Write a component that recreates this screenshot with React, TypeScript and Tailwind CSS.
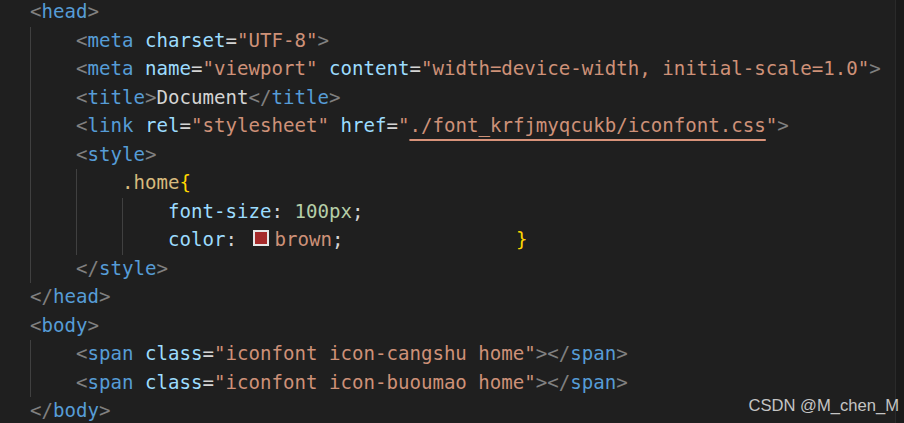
import React from "react";

const br = "text-[#808080]";
const tg = "text-[#569cd6]";
const at = "text-[#9cdcfe]";
const st = "text-[#ce9178]";
const tx = "text-[#d4d4d4]";

const B = ({ children }: { children: React.ReactNode }) => <span className={br}>{children}</span>;
const T = ({ children }: { children: React.ReactNode }) => <span className={tg}>{children}</span>;
const A = ({ children }: { children: React.ReactNode }) => <span className={at}>{children}</span>;
const S = ({ children }: { children: React.ReactNode }) => <span className={st}>{children}</span>;
const X = ({ children }: { children: React.ReactNode }) => <span className={tx}>{children}</span>;

type Line = { indent: number; guides: number[]; content: React.ReactNode };

const lines: Line[] = [
  { indent: 0, guides: [], content: (<><B>&lt;</B><T>head</T><B>&gt;</B></>) },
  { indent: 1, guides: [0], content: (<><B>&lt;</B><T>meta</T> <A>charset</A><X>=</X><S>"UTF-8"</S><B>&gt;</B></>) },
  { indent: 1, guides: [0], content: (<><B>&lt;</B><T>meta</T> <A>name</A><X>=</X><S>"viewport"</S> <A>content</A><X>=</X><S>"width=device-width, initial-scale=1.0"</S><B>&gt;</B></>) },
  { indent: 1, guides: [0], content: (<><B>&lt;</B><T>title</T><B>&gt;</B><X>Document</X><B>&lt;/</B><T>title</T><B>&gt;</B></>) },
  { indent: 1, guides: [0], content: (<><B>&lt;</B><T>link</T> <A>rel</A><X>=</X><S>"stylesheet"</S> <A>href</A><X>=</X><S>"</S><span className="text-[#ce9178] underline decoration-2 underline-offset-[7px] decoration-[#d9937a]">./font_krfjmyqcukb/iconfont.css</span><S>"</S><B>&gt;</B></>) },
  { indent: 1, guides: [0], content: (<><B>&lt;</B><T>style</T><B>&gt;</B></>) },
  { indent: 2, guides: [0, 1], content: (<><span className="text-[#d7ba7d]">.home</span><span className="text-[#ffd700]">{"{"}</span></>) },
  { indent: 3, guides: [0, 1, 2], content: (<><A>font-size</A><X>: </X><span className="text-[#b5cea8]">100px</span><X>;</X></>) },
  {
    indent: 3,
    guides: [0, 1, 2],
    content: (
      <>
        <A>color</A><X>: </X>
        <span className="inline-block w-[16px] h-[16px] ml-[4.5px] mr-[5.5px] border-2 border-[#e6e6e6] bg-[#a52a2a]"></span>
        <S>brown</S><X>;</X>
        <span>{"               "}</span>
        <span className="text-[#ffd700]">{"}"}</span>
      </>
    ),
  },
  { indent: 1, guides: [0], content: (<><B>&lt;/</B><T>style</T><B>&gt;</B></>) },
  { indent: 0, guides: [], content: (<><B>&lt;/</B><T>head</T><B>&gt;</B></>) },
  { indent: 0, guides: [], content: (<><B>&lt;</B><T>body</T><B>&gt;</B></>) },
  { indent: 1, guides: [0], content: (<><B>&lt;</B><T>span</T> <A>class</A><X>=</X><S>"iconfont icon-cangshu home"</S><B>&gt;&lt;/</B><T>span</T><B>&gt;</B></>) },
  { indent: 1, guides: [0], content: (<><B>&lt;</B><T>span</T> <A>class</A><X>=</X><S>"iconfont icon-buoumao home"</S><B>&gt;&lt;/</B><T>span</T><B>&gt;</B></>) },
  { indent: 0, guides: [], content: (<><B>&lt;/</B><T>body</T><B>&gt;</B></>) },
];

export default function App() {
  return (
    <div className="relative flex w-[904px] h-[423px] overflow-hidden bg-[#1f1f1f]">
      <div className="flex-1 overflow-hidden">
        <div
          className="mt-[-2px] flex flex-col text-[19.1px] text-[#d4d4d4]"
          style={{ fontFamily: '"DejaVu Sans Mono", "Liberation Mono", monospace' }}
        >
          {lines.map((l, i) => (
            <div key={i} className="flex h-[28.5px] leading-[28.5px] pl-[30px] whitespace-pre">
              {Array.from({ length: l.indent }).map((_, k) => (
                <span
                  key={k}
                  className={
                    l.guides.includes(k)
                      ? "w-[46px] shrink-0 self-stretch border-l border-[#404040]"
                      : "w-[46px] shrink-0 self-stretch"
                  }
                />
              ))}
              <span className="whitespace-pre">{l.content}</span>
            </div>
          ))}
        </div>
      </div>
      <div className="w-[9px] shrink-0 bg-[#1a1a1a] border-l border-[#2a2a2a]" />
      <div
        className="absolute right-[5px] top-[398px] text-[16.6px] leading-none text-[#c4c4c4]"
        style={{ fontFamily: '"Liberation Sans", Arial, sans-serif' }}
      >
        CSDN @M_chen_M
      </div>
    </div>
  );
}
